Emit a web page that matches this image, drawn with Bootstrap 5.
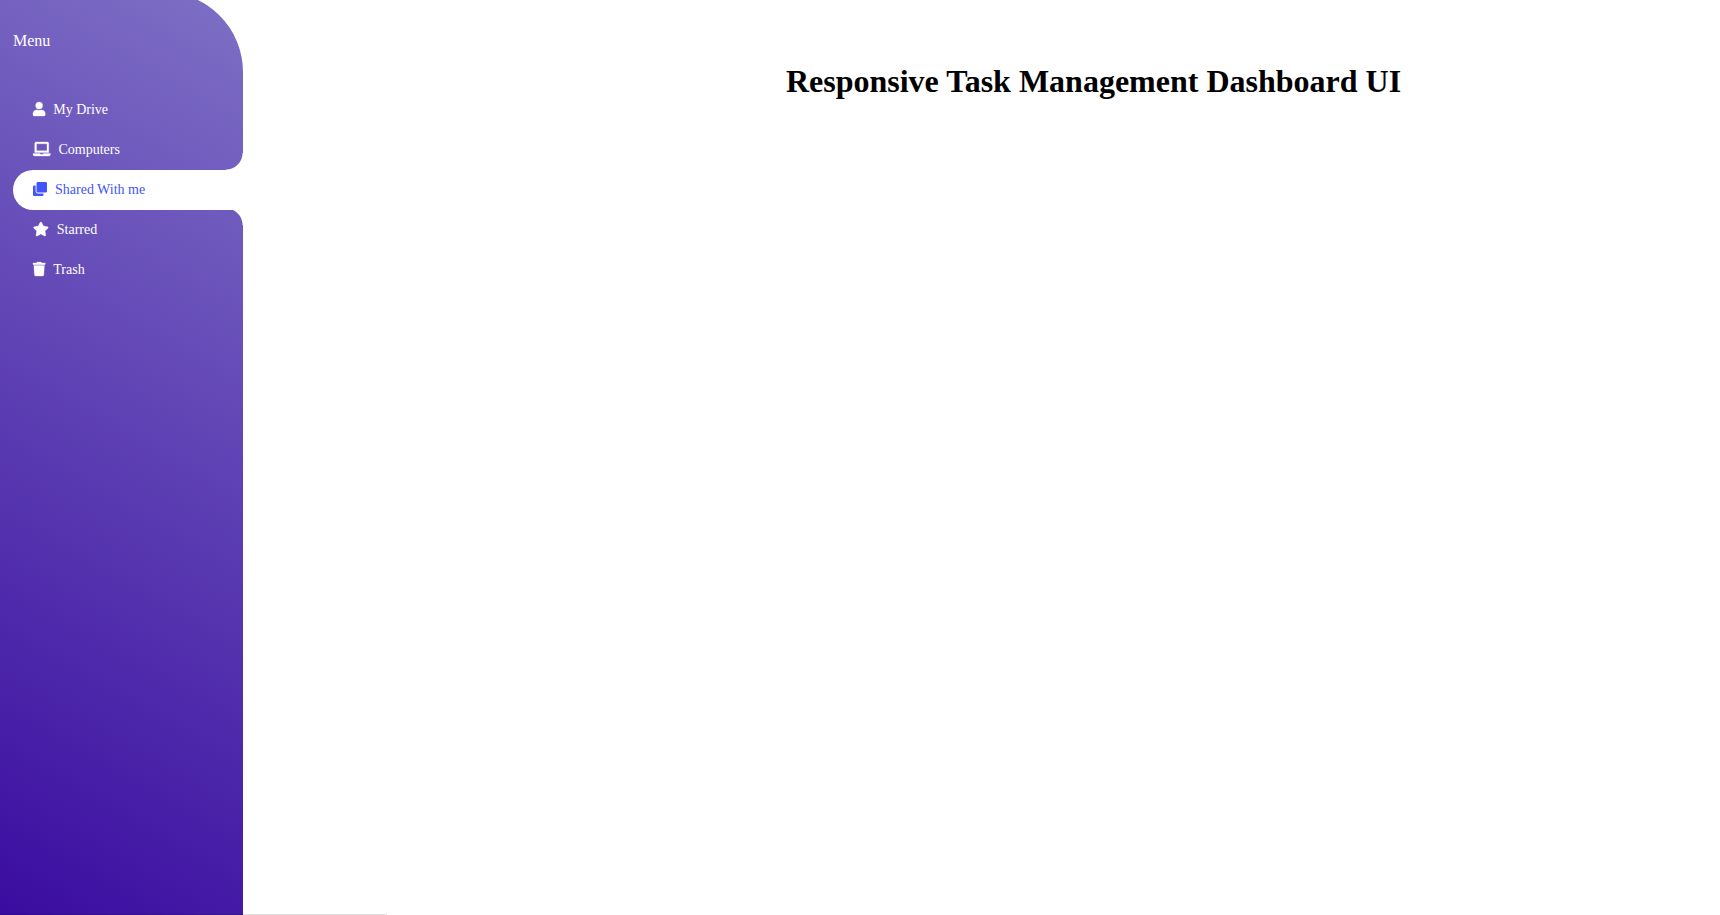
<!DOCTYPE html>
<html lang="en">
<head>
<meta charset="utf-8">
<meta name="viewport" content="width=device-width, initial-scale=1">
<title>Responsive Task Management Dashboard UI</title>
<link href="https://cdn.jsdelivr.net/npm/bootstrap@5.3.0/dist/css/bootstrap.min.css" rel="stylesheet">
<style>
  body { font-family: "Liberation Serif", "Times New Roman", serif; color: #000; line-height: 1.15; }
  .sidebar {
    width: 243px;
    margin-top: -8px;
    padding: 40px 0 0 13px;
    border-top-right-radius: 80px;
    background: linear-gradient(30deg, #3a0ca0, #7e70c5);
  }
  .sidebar-title { font-size: 16px; line-height: 18px; margin-bottom: 40px; }
  .sidebar .nav-link { height: 40px; padding: 0 20px; gap: 8px; font-size: 14px; color: #fff; border-radius: 20px 0 0 20px; }
  .sidebar .nav-link svg { height: 14px; margin-bottom: 2px; fill: currentColor; stroke: currentColor; stroke-width: 12px; overflow: visible; }
  .sidebar .nav-link.active { position: relative; background: #fff; color: #4255fb; }
  .sidebar .nav-link.active svg { stroke: none; }
  /* rounded notches above and below the active tab */
  .sidebar .nav-link.active::before,
  .sidebar .nav-link.active::after { content: ""; position: absolute; right: 0; width: 17px; height: 17px; }
  .sidebar .nav-link.active::before { bottom: 100%; background: radial-gradient(circle at 0 0, transparent 16px, #fff 17px); }
  .sidebar .nav-link.active::after { top: calc(100% - 2px); background: radial-gradient(circle at 0 100%, transparent 16px, #fff 17px); clip-path: inset(2px 0 0 0); }
  .page-title { font-size: 32px; line-height: 36px; padding-top: 63px; }
  @media (min-width: 992px) { .page-main { padding-left: 224px; } }
  .status-edge { width: 387px; height: 1px; background: rgba(0,0,0,.12); }
</style>
</head>
<body>
<div class="d-flex min-vh-100">
  <aside class="sidebar flex-shrink-0 text-white">
    <div class="sidebar-title">Menu</div>
    <nav class="nav flex-column flex-nowrap">
      <a class="nav-link d-flex align-items-center" href="#">
        <svg viewBox="0 0 448 512" aria-hidden="true"><path d="M224 256a128 128 0 1 0 0-256 128 128 0 1 0 0 256zm89.600 32h-16.700c-22.200 10.200-46.900 16-72.900 16s-50.600-5.800-72.900-16h-16.700C60.200 288 0 348.200 0 422.400V464c0 26.500 21.500 48 48 48h352c26.500 0 48-21.500 48-48v-41.600c0-74.200-60.200-134.400-134.400-134.400z"/></svg>
        <span>My Drive</span>
      </a>
      <a class="nav-link d-flex align-items-center" href="#">
        <svg viewBox="0 0 640 512" aria-hidden="true"><path d="M624 416H381.540c-.740 19.810-14.710 32-32.740 32H288c-18.690 0-33.020-17.470-32.770-32H16c-8.800 0-16 7.200-16 16v16c0 35.200 28.800 64 64 64h512c35.200 0 64-28.800 64-64v-16c0-8.800-7.200-16-16-16zM576 48c0-26.400-21.600-48-48-48H112C85.600 0 64 21.600 64 48v336h512V48zm-64 272H128V64h384v256z"/></svg>
        <span>Computers</span>
      </a>
      <a class="nav-link active d-flex align-items-center" href="#" aria-current="page">
        <svg viewBox="0 0 512 512" aria-hidden="true"><path d="M464 0H176c-26.510 0-48 21.490-48 48v288c0 26.510 21.490 48 48 48h288c26.510 0 48-21.490 48-48V48c0-26.510-21.490-48-48-48zM176 416c-44.112 0-80-35.888-80-80V128H48c-26.510 0-48 21.490-48 48v288c0 26.510 21.490 48 48 48h288c26.510 0 48-21.490 48-48v-48H176z"/></svg>
        <span>Shared With me</span>
      </a>
      <a class="nav-link d-flex align-items-center" href="#">
        <svg viewBox="0 0 576 512" aria-hidden="true"><path d="M259.300 17.800L194 150.200 47.900 171.500c-26.200 3.800-36.700 36.100-17.700 54.600l105.700 103-25 145.500c-4.500 26.300 23.200 46 46.400 33.700L288 439.600l130.700 68.700c23.200 12.200 50.900-7.400 46.400-33.700l-25-145.500 105.700-103c19-18.500 8.500-50.800-17.700-54.600L382 150.200 316.700 17.800c-11.700-23.600-45.600-23.900-57.400 0z"/></svg>
        <span>Starred</span>
      </a>
      <a class="nav-link d-flex align-items-center" href="#">
        <svg viewBox="0 0 448 512" aria-hidden="true"><path d="M432 32H312l-9.400-18.700A24 24 0 0 0 281.100 0H166.800a23.720 23.720 0 0 0-21.400 13.300L136 32H16A16 16 0 0 0 0 48v32a16 16 0 0 0 16 16h416a16 16 0 0 0 16-16V48a16 16 0 0 0-16-16zM53.200 467a48 48 0 0 0 47.900 45h245.800a48 48 0 0 0 47.900-45L416 128H32z"/></svg>
        <span>Trash</span>
      </a>
    </nav>
  </aside>
  <main class="page-main flex-grow-1 text-center">
    <h1 class="page-title fw-bold mb-0">Responsive Task Management Dashboard UI</h1>
  </main>
</div>
<div class="status-edge position-fixed bottom-0 start-0"></div>
<script src="https://cdn.jsdelivr.net/npm/bootstrap@5.3.0/dist/js/bootstrap.bundle.min.js"></script>
</body>
</html>
